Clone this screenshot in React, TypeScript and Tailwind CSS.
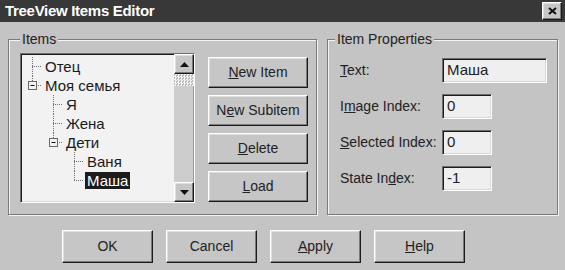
import React from "react";

const raised =
  "border border-t-white border-l-white border-r-[#1a1a1a] border-b-[#1a1a1a] shadow-[inset_-1px_-1px_0_#7a7a7a,inset_1px_1px_0_#dedede]";
const sunken =
  "border border-t-[#6e6e6e] border-l-[#6e6e6e] border-r-white border-b-white shadow-[inset_1px_1px_0_#1a1a1a,inset_-1px_-1px_0_#d8d8d8]";
const etched =
  "border border-[#7a7a7a] shadow-[inset_1px_1px_0_#f4f4f4,1px_1px_0_#f4f4f4]";

const indents = ["pl-0", "pl-[21px]", "pl-[42px]"];

type Node = {
  text: string;
  level: number;
  box?: boolean;
  last?: boolean;
  selected?: boolean;
};

const nodes: Node[] = [
  { text: "Отец", level: 0 },
  { text: "Моя семья", level: 0, box: true, last: true },
  { text: "Я", level: 1 },
  { text: "Жена", level: 1 },
  { text: "Дети", level: 1, box: true, last: true },
  { text: "Ваня", level: 2 },
  { text: "Маша", level: 2, last: true, selected: true },
];

// dotted connector + optional expand box for one tree row
const Connector = ({ box, last }: { box?: boolean; last?: boolean }) => (
  <svg width="21" height="19" className="shrink-0">
    <line
      x1="11.5"
      y1="0"
      x2="11.5"
      y2={last ? 9.5 : 19}
      stroke="#707070"
      strokeDasharray="1 1"
    />
    <line
      x1="11"
      y1="9.5"
      x2="21"
      y2="9.5"
      stroke="#707070"
      strokeDasharray="1 1"
    />
    {box && (
      <>
        <rect x="7.5" y="5.5" width="8" height="8" fill="#f2f2f2" stroke="#6a6a6a" />
        <line x1="9.5" y1="9.5" x2="13.5" y2="9.5" stroke="#111" />
      </>
    )}
  </svg>
);

const Arrow = ({ up }: { up?: boolean }) => (
  <svg width="9" height="5">
    <polygon points={up ? "0,5 9,5 4.5,0" : "0,0 9,0 4.5,5"} fill="#111" />
  </svg>
);

const Btn = ({ children, w }: { children: React.ReactNode; w: string }) => (
  <button
    className={`${raised} ${w} flex items-center justify-center bg-[#c6c6c6] text-[14px] text-[#222]`}
  >
    {children}
  </button>
);

const Field = ({ w, value }: { w: string; value: string }) => (
  <div
    className={`${sunken} ${w} h-[25px] bg-[#efefef] flex items-center pl-[4px] text-[15px] text-[#222]`}
  >
    {value}
  </div>
);

export default function App() {
  return (
    <div className="w-[565px] h-[270px] overflow-hidden bg-[#c4c4c4] font-['Liberation_Sans',Arial,sans-serif] text-[14px] text-[#222]">
      {/* TITLE BAR */}
      <div className="h-[22px] bg-[#383838] flex items-center justify-between pl-[5px] pr-[3px]">
        <span className="text-white font-bold text-[15px] tracking-[-0.3px]">
          TreeView Items Editor
        </span>
        <button
          className={`${raised} w-[20px] h-[18px] bg-[#c6c6c6] flex items-center justify-center`}
        >
          <svg width="9" height="8">
            <path d="M1 1 L8 7 M8 1 L1 7" stroke="#111" strokeWidth="2" />
          </svg>
        </button>
      </div>

      {/* GROUPS */}
      <div className="flex gap-[10px] pl-[8px] pt-[9px]">
        <fieldset className={`${etched} w-[309px] h-[184px] pl-[11px] pt-[6px]`}>
          <legend className="px-[2px] leading-[16px] bg-[#c4c4c4]">Items</legend>
          <div className="flex gap-[13px]">
            {/* TREE */}
            <div className={`${sunken} w-[175px] h-[150px] bg-[#f2f2f2] flex`}>
              <div className="flex-1 pt-[3px] text-[15px] text-[#1a1a1a]">
                {nodes.map((n) => (
                  <div
                    key={n.text}
                    className={`${indents[n.level]} flex items-center h-[19px]`}
                  >
                    <Connector box={n.box} last={n.last} />
                    <span
                      className={`ml-[1px] px-[2px] leading-[17px] ${
                        n.selected ? "bg-[#1c1c1c] text-white" : ""
                      }`}
                    >
                      {n.text}
                    </span>
                  </div>
                ))}
              </div>
              {/* SCROLLBAR */}
              <div className="w-[20px] flex flex-col bg-[#d6d6d6]">
                <div className={`${raised} h-[20px] bg-[#c6c6c6] flex items-center justify-center`}>
                  <Arrow up />
                </div>
                <div className="h-[12px] bg-[image:repeating-conic-gradient(#f4f4f4_0%_25%,#b8b8b8_0%_50%)] bg-[length:3px_3px]" />
                <div className="flex-1 bg-[#cdcdcd] border-r border-[#9a9a9a]" />
                <div className={`${raised} h-[20px] bg-[#c6c6c6] flex items-center justify-center`}>
                  <Arrow />
                </div>
              </div>
            </div>

            {/* ITEM BUTTONS */}
            <div className="flex flex-col gap-[7px] mt-[4px]">
              <Btn w="w-[100px] h-[31px]">
                <span><u>N</u>ew Item</span>
              </Btn>
              <Btn w="w-[100px] h-[31px]">
                <span>N<u>e</u>w Subitem</span>
              </Btn>
              <Btn w="w-[100px] h-[31px]">
                <span><u>D</u>elete</span>
              </Btn>
              <Btn w="w-[100px] h-[31px]">
                <span><u>L</u>oad</span>
              </Btn>
            </div>
          </div>
        </fieldset>

        <fieldset className={`${etched} w-[231px] h-[184px] pl-[12px] pt-[11px]`}>
          <legend className="ml-[-5px] px-[2px] leading-[16px] bg-[#c4c4c4]">
            Item Properties
          </legend>
          <div className="flex flex-col gap-[11px]">
            <div className="flex items-center">
              <span className="w-[102px]"><u>T</u>ext:</span>
              <Field w="w-[105px]" value="Маша" />
            </div>
            <div className="flex items-center">
              <span className="w-[102px]">I<u>m</u>age Index:</span>
              <Field w="w-[50px]" value="0" />
            </div>
            <div className="flex items-center">
              <span className="w-[102px]"><u>S</u>elected Index:</span>
              <Field w="w-[50px]" value="0" />
            </div>
            <div className="flex items-center">
              <span className="w-[102px]">State In<u>d</u>ex:</span>
              <Field w="w-[50px]" value="-1" />
            </div>
          </div>
        </fieldset>
      </div>

      {/* DIALOG BUTTONS */}
      <div className="flex gap-[13px] pl-[62px] pt-[15px]">
        <Btn w="w-[91px] h-[33px]">OK</Btn>
        <Btn w="w-[91px] h-[33px]">Cancel</Btn>
        <Btn w="w-[91px] h-[33px]">
          <span><u>A</u>pply</span>
        </Btn>
        <Btn w="w-[91px] h-[33px]">
          <span><u>H</u>elp</span>
        </Btn>
      </div>
    </div>
  );
}
